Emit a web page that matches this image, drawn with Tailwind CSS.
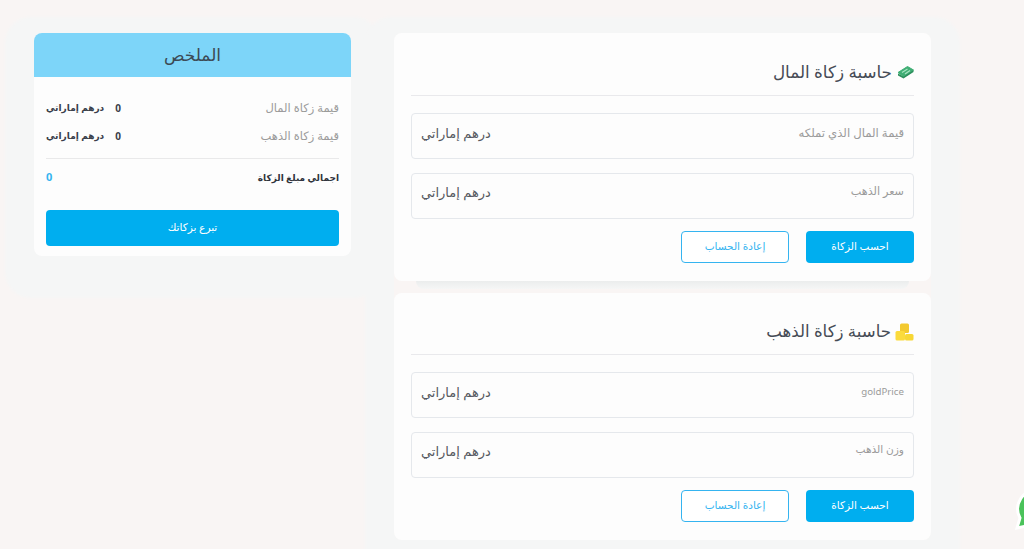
<!DOCTYPE html>
<html lang="ar">
  <head>
    <meta charset="UTF-8" />
    <meta name="viewport" content="width=device-width, initial-scale=1.0" />
    <title>حاسبة الزكاة</title>
    <script src="https://cdn.jsdelivr.net/npm/@tailwindcss/browser@4"></script>
  </head>
  <body class="bg-[#f9f5f4] font-['Noto_Sans','DejaVu_Sans',sans-serif] text-[#3f4450] overflow-hidden">
    <div class="relative h-[549px] w-[1024px] overflow-hidden">
      <div class="flex items-start pl-[34px] pt-[33px]">
        <!-- summary -->
        <aside dir="rtl" class="w-[317px] h-[223px] shrink-0 rounded-[8px] overflow-hidden bg-[#fdfdfd] shadow-[0_13px_3px_29px_#f5f6f6]">
          <div class="h-[44px] bg-[#7dd5f9] flex items-center justify-center text-[17px] text-[#3c4a55]">الملخص</div>
          <div class="px-[12px] pt-[17px]">
            <div class="flex justify-between items-center h-[28px]">
              <span class="text-[11.500px] text-[#9b9b9b]">قيمة زكاة المال</span>
              <span class="flex items-center gap-[11px] text-[9px] font-bold text-[#3a3f4a]"><span class="text-[10px]">0</span><span>درهم إماراتي</span></span>
            </div>
            <div class="flex justify-between items-center h-[28px]">
              <span class="text-[11.500px] text-[#9b9b9b]">قيمة زكاة الذهب</span>
              <span class="flex items-center gap-[11px] text-[9px] font-bold text-[#3a3f4a]"><span class="text-[10px]">0</span><span>درهم إماراتي</span></span>
            </div>
            <div class="mt-[8px] border-t border-[#e9e9ea]"></div>
            <div class="flex justify-between items-center h-[37px] font-bold">
              <span class="text-[9px] text-[#2f333c]">اجمالي مبلغ الزكاة</span>
              <span class="text-[11px] text-[#35b4f0]">0</span>
            </div>
            <button class="mt-[14px] w-full h-[36px] rounded-[4px] bg-[#00aeef] text-white text-[10.500px]">تبرع بزكاتك</button>
          </div>
        </aside>

        <main dir="rtl" class="ml-[43px] w-[537px] shrink-0 flex flex-col gap-[12px] rounded-[8px] shadow-[0_13px_3px_29px_#f5f6f6]">
          <!-- money -->
          <section class="relative h-[248px] rounded-[8px] bg-[#fdfdfd] px-[17px]">
            <div class="h-[63px] border-b border-[#e9e9ec] pt-[16px] flex items-center gap-[5px]">
              <svg class="w-[17px] h-[14px] shrink-0" viewBox="0 0 17 14">
                <path d="M1 7.500 10.500 1.500 16.500 5 6.500 11.500z" fill="#3fae74" stroke="#3fae74" stroke-linejoin="round" />
                <path d="M1 8.500v2l5.500 3 10-6.500V5L6.500 11.500z" fill="#2b8f5c" />
                <path d="M5 7.500 10.500 4M8 9l5-3.500" stroke="#a8e3c2" stroke-width="1.200" />
              </svg>
              <h2 class="text-[16.800px] text-[#464b55]">حاسبة زكاة المال</h2>
            </div>
            <div class="mt-[17px] h-[46px] rounded-[4px] border border-[#e5e8ec] flex justify-between pt-[10px] px-[9px]">
              <span class="text-[11.700px] text-[#9b9b9b]">قيمة المال الذي تملكه</span>
              <span class="text-[13px] text-[#55585f]">درهم إماراتي</span>
            </div>
            <div class="mt-[14px] h-[46px] rounded-[4px] border border-[#e5e8ec] flex justify-between pt-[9px] px-[9px]">
              <span class="text-[11.200px] text-[#9b9b9b]">سعر الذهب</span>
              <span class="text-[13px] text-[#55585f]">درهم إماراتي</span>
            </div>
            <div class="mt-[12px] flex gap-[17px]">
              <button class="w-[108px] h-[32px] rounded-[4px] bg-[#00aeef] text-white text-[10.500px]">احسب الزكاة</button>
              <button class="w-[108px] h-[32px] rounded-[4px] border border-[#35b4f0] bg-white text-[#35b4f0] text-[10.500px]">إعادة الحساب</button>
            </div>
            <div class="absolute left-[22px] right-[22px] -bottom-[8px] h-[8px] rounded-b-[10px] bg-linear-to-b from-[#ebeded] to-[#f5f6f6]"></div>
          </section>

          <!-- gold -->
          <section class="relative h-[247px] rounded-[8px] bg-[#fdfdfd] px-[17px]">
            <div class="h-[62px] border-b border-[#e9e9ec] pt-[16px] flex items-center gap-[4px]">
              <svg class="w-[19px] h-[18px] shrink-0" viewBox="0 0 19 18">
                <rect x="5" y="0.500" width="9" height="9.500" rx="1.500" fill="#f3c92f" />
                <rect x="0.500" y="8" width="9.500" height="9.500" rx="1.500" fill="#fbdb3c" />
                <rect x="10" y="11" width="8.500" height="6.500" rx="1.500" fill="#f7d735" />
              </svg>
              <h2 class="text-[16.600px] text-[#464b55]">حاسبة زكاة الذهب</h2>
            </div>
            <div class="mt-[17px] h-[46px] rounded-[4px] border border-[#e5e8ec] flex justify-between pt-[10px] px-[9px]">
              <span class="text-[9.700px] leading-[18px] text-[#9b9b9b]">goldPrice</span>
              <span class="text-[13px] text-[#55585f]">درهم إماراتي</span>
            </div>
            <div class="mt-[14px] h-[46px] rounded-[4px] border border-[#e5e8ec] flex justify-between pt-[9px] px-[9px]">
              <span class="text-[10.600px] text-[#9b9b9b]">وزن الذهب</span>
              <span class="text-[13px] text-[#55585f]">درهم إماراتي</span>
            </div>
            <div class="mt-[12px] flex gap-[17px]">
              <button class="w-[108px] h-[32px] rounded-[4px] bg-[#00aeef] text-white text-[10.500px]">احسب الزكاة</button>
              <button class="w-[108px] h-[32px] rounded-[4px] border border-[#35b4f0] bg-white text-[#35b4f0] text-[10.500px]">إعادة الحساب</button>
            </div>
          </section>
        </main>
      </div>

      <!-- whatsapp -->
      <svg class="absolute left-[1014px] top-[488px] w-[40px] h-[42px]" viewBox="0 0 40 42">
        <path d="M24 2a19 19 0 1 1-9 35.500L3 40l3-10A19 19 0 0 1 24 2z" fill="#4ac25a" stroke="#fff" stroke-width="3" />
      </svg>
    </div>
  </body>
</html>
